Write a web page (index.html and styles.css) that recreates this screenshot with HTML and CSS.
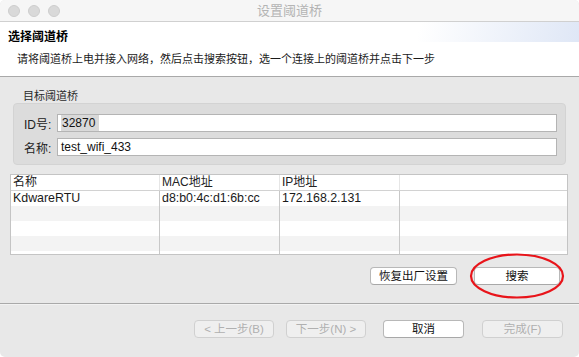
FILE: index.html
```html
<!DOCTYPE html>
<html lang="zh-CN">
<head>
  <meta charset="UTF-8" />
  <title>设置阈道桥</title>
  <link rel="stylesheet" href="styles.css">
</head>
<body>
  <div class="window">
    <div class="titlebar">
      <div class="lights">
        <span class="light"></span>
        <span class="light"></span>
        <span class="light"></span>
      </div>
      <div class="title">设置阈道桥</div>
      <div></div>
    </div>

    <div class="header">
      <h3>选择阈道桥</h3>
      <p>请将阈道桥上电并接入网络，然后点击搜索按钮，选一个连接上的阈道桥并点击下一步</p>
    </div>

    <div class="main">
      <div class="group-label">目标阈道桥</div>
      <div class="group">
        <div class="field-row">
          <label>ID号:</label>
          <div class="field"><span class="selected">32870</span></div>
        </div>
        <div class="field-row">
          <label>名称:</label>
          <div class="field">test_wifi_433</div>
        </div>
      </div>

      <div class="table">
        <div class="row head">
          <div>名称</div><div>MAC地址</div><div>IP地址</div><div></div>
        </div>
        <div class="row">
          <div>KdwareRTU</div><div>d8:b0:4c:d1:6b:cc</div><div>172.168.2.131</div><div></div>
        </div>
        <div class="row"><div></div><div></div><div></div><div></div></div>
        <div class="row"><div></div><div></div><div></div><div></div></div>
        <div class="row"><div></div><div></div><div></div><div></div></div>
        <div class="row"><div></div><div></div><div></div><div></div></div>
      </div>

      <div class="actions">
        <button class="btn reset">恢复出厂设置</button>
        <button class="btn search">搜索</button>
      </div>

      <svg class="mark" width="98" height="48" viewBox="0 0 98 48">
        <ellipse cx="49" cy="24" rx="46" ry="21.5" fill="none" stroke="#e8141a" stroke-width="2.2"/>
      </svg>
    </div>

    <div class="footer">
      <button class="btn off prev">&lt; 上一步(B)</button>
      <button class="btn off next">下一步(N) &gt;</button>
      <button class="btn cancel">取消</button>
      <button class="btn off finish">完成(F)</button>
    </div>
  </div>
</body>
</html>
```

FILE: styles.css
```css
body {
  margin: 0;
  background: white;
  font-family: "Liberation Sans", "Noto Sans CJK SC", sans-serif;
  font-size: 12px;
  color: #1a1a1a;
}
.window {
  width: 579px;
  height: 357px;
  border-radius: 5px;
  overflow: hidden;
  background: #e8e8e8;
}
.titlebar {
  height: 21px;
  background: #f6f6f6;
  border-bottom: 1px solid #d0d0d0;
  display: grid;
  grid-template-columns: 1fr auto 1fr;
  align-items: center;
}
.lights {
  display: flex;
  gap: 8px;
  padding-left: 8px;
}
.light {
  width: 10px;
  height: 10px;
  border-radius: 50%;
  background: #d9d9d9;
  border: 1px solid #cdcdcd;
}
.title {
  color: #b4b4b4;
  font-size: 13px;
  line-height: 21px;
}
.header {
  height: 55px;
  border-bottom: 1px solid #a9a9a9;
  background: linear-gradient(102deg, rgba(255,255,255,0) 72%, #dfe7f6 100%) no-repeat top / 100% 20px, white;
  padding: 8px 0 0 8px;
  box-sizing: border-box;
}
.header h3 {
  margin: 0;
  font-size: 12px;
  line-height: 15px;
  font-weight: bold;
  color: #000;
}
.header p {
  margin: 7px 0 0 9px;
  font-size: 11px;
  line-height: 14px;
  color: #1a1a1a;
}
.main {
  position: relative;
  height: 227px;
  box-sizing: border-box;
  border-bottom: 1px solid #a9a9a9;
  padding-top: 12px;
}
.group-label {
  padding-left: 23px;
  line-height: 14px;
  font-size: 11px;
  color: #2a2a2a;
}
.group {
  margin: 0 13px;
  background: #dcdcdc;
  border: 1px solid #d3d3d3;
  border-radius: 4px;
  padding: 10px 8px 8px 10px;
  display: flex;
  flex-direction: column;
  gap: 6px;
}
.field-row {
  display: flex;
  align-items: center;
}
.field-row label {
  width: 33px;
  color: #222;
}
.field {
  flex: 1;
  height: 18px;
  box-sizing: border-box;
  background: white;
  border: 1px solid #b4b4b4;
  padding: 0 3px;
  line-height: 16px;
  color: #111;
}
.selected {
  background: #d9d9d9;
  display: inline-block;
  padding: 0 4px 0 1px;
}
.table {
  margin: 9px 11px 0 10px;
  height: 81px;
  box-sizing: border-box;
  border: 1px solid #c4c4c4;
  background: white;
  overflow: hidden;
}
.row {
  display: grid;
  grid-template-columns: 149px 120px 120px 1fr;
  height: 15px;
  line-height: 15px;
  font-size: 12.4px;
}
.row > div {
  border-right: 1px solid #c8c8c8;
  padding-left: 2px;
  white-space: nowrap;
}
.row > div:last-child {
  border-right: none;
}
.row:nth-child(odd) {
  background: #f3f3f3;
}
.row.head {
  background: white;
  height: 16px;
  border-bottom: 1px solid #d2d2d2;
  box-sizing: border-box;
  color: #222;
  font-size: 12px;
}
.row.head > div {
  border-right-color: #e6e6e6;
}
.actions {
  display: flex;
  justify-content: flex-end;
  gap: 17px;
  margin: 12px 19px 0 0;
}
.btn {
  height: 18px;
  box-sizing: border-box;
  border: 1px solid #b8b8b8;
  border-bottom-color: #a8a8a8;
  border-radius: 4px;
  background: white;
  font-family: "Liberation Sans", "Noto Sans CJK SC", sans-serif;
  font-size: 11.5px;
  color: #111;
  padding: 0;
  line-height: 16px;
}
.reset {
  width: 87px;
}
.search {
  width: 86px;
}
.mark {
  position: absolute;
  left: 468px;
  top: 175px;
}
.footer {
  border-top: 1px solid #f2f2f2;
  display: flex;
  justify-content: flex-end;
  padding: 15px 16px 0 0;
}
.btn.off {
  background: #efefef;
  border-color: #d0d0d0;
  color: #b0b0b0;
}
.prev, .next {
  width: 80px;
}
.cancel, .finish {
  width: 81px;
}
.next {
  margin-left: 12px;
}
.cancel {
  margin-left: 17px;
}
.finish {
  margin-left: 18px;
}
```
